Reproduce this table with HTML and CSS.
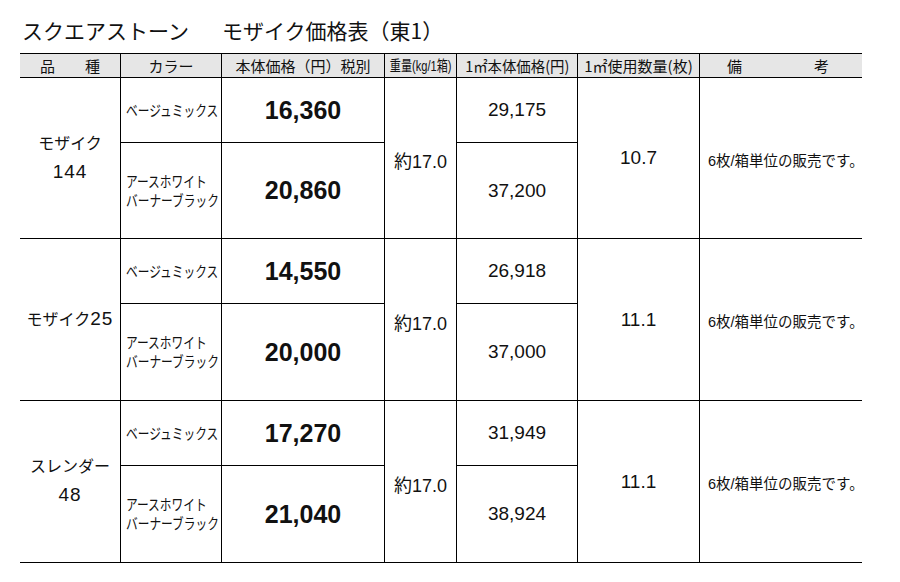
FILE: index.html
```html
<!DOCTYPE html>
<html lang="ja">
<head>
<meta charset="utf-8">
<title>スクエアストーン モザイク価格表</title>
<link rel="stylesheet" href="styles.css">
</head>
<body>
<h1 class="title">スクエアストーン<span class="gap">　</span>モザイク価格表（東1）</h1>
<div class="grid">
  <div class="h">品　　種</div>
  <div class="h">カラー</div>
  <div class="h">本体価格（円）税別</div>
  <div class="h"><span class="hcond">重量(kg/1箱)</span></div>
  <div class="h"><span class="hm2">1㎡本体価格(円)</span></div>
  <div class="h">1㎡使用数量(枚)</div>
  <div class="h hnote"><span>備</span><span>考</span></div>

  <div class="c prod span2"><div>モザイク<br><span class="num">144</span></div></div>
  <div class="c color"><span class="cond">ベージュミックス</span></div>
  <div class="c price">16,360</div>
  <div class="c weight span2">約17.0</div>
  <div class="c m2">29,175</div>
  <div class="c usage span2">10.7</div>
  <div class="c note span2">6枚/箱単位の販売です。</div>
  <div class="c color"><span class="cond">アースホワイト<br>バーナーブラック</span></div>
  <div class="c price">20,860</div>
  <div class="c m2">37,200</div>

  <div class="c prod span2"><div>モザイク<span class="num">25</span></div></div>
  <div class="c color"><span class="cond">ベージュミックス</span></div>
  <div class="c price">14,550</div>
  <div class="c weight span2">約17.0</div>
  <div class="c m2">26,918</div>
  <div class="c usage span2">11.1</div>
  <div class="c note span2">6枚/箱単位の販売です。</div>
  <div class="c color"><span class="cond">アースホワイト<br>バーナーブラック</span></div>
  <div class="c price">20,000</div>
  <div class="c m2">37,000</div>

  <div class="c prod span2"><div>スレンダー<br><span class="num">48</span></div></div>
  <div class="c color"><span class="cond">ベージュミックス</span></div>
  <div class="c price">17,270</div>
  <div class="c weight span2">約17.0</div>
  <div class="c m2">31,949</div>
  <div class="c usage span2">11.1</div>
  <div class="c note span2">6枚/箱単位の販売です。</div>
  <div class="c color"><span class="cond">アースホワイト<br>バーナーブラック</span></div>
  <div class="c price">21,040</div>
  <div class="c m2">38,924</div>
</div>
</body>
</html>
```
FILE: styles.css
```css
* { box-sizing: border-box; }
html, body { margin: 0; padding: 0; background: #fff; }
body {
  font-family: "Liberation Sans", "Noto Sans CJK JP", sans-serif;
  color: #111;
  width: 900px;
  height: 582px;
  overflow: hidden;
}
.title {
  margin: 0;
  padding: 16px 0 0 22px;
  height: 53px;
  font-family: "Noto Sans CJK JP", sans-serif;
  font-size: 21px;
  font-weight: 400;
  line-height: 28px;
  color: #111;
}
.title .gap { margin-right: 12px; }

.grid {
  margin-left: 20px;
  width: 842px;
  display: grid;
  grid-template-columns: 101px 101px 163px 72px 121px 122px 162px;
  grid-template-rows: 24px 65px 96px 65px 97px 65px 97px;
  border-top: 1px solid #000;
}
.grid > div {
  border-right: 1px solid #000;
  border-bottom: 1px solid #000;
  display: flex;
  align-items: center;
  justify-content: center;
}
.grid > div:nth-child(7) { border-right: none; }
.grid > .note { border-right: none; }

.h {
  background: #e6e6e6;
  font-size: 15px;
  white-space: nowrap;
  font-family: "Noto Sans CJK JP", sans-serif;
  line-height: 22px;
  overflow: hidden;
}
.hcond {
  display: inline-block;
  transform: scaleX(0.74);
  font-family: "Liberation Sans", "Noto Sans CJK JP", sans-serif;
}
.hm2 {
  display: inline-block;
  transform: scaleX(0.96);
}
.hnote {
  justify-content: space-between !important;
  padding: 0 33px 0 27px;
}
.span2 { grid-row: span 2; }

.prod {
  font-size: 16px;
  line-height: 28px;
  text-align: center;
  white-space: nowrap;
}
.prod .num { font-size: 19px; letter-spacing: 1px; }
.color {
  justify-content: flex-start !important;
  padding-left: 5px;
}
.cond {
  display: inline-block;
  white-space: nowrap;
  font-size: 15px;
  line-height: 19px;
  transform: scaleX(0.78);
  transform-origin: left center;
}
.price {
  font-size: 25px;
  font-weight: 700;
}
.weight { font-size: 18px; padding-top: 4px; }
.m2 { font-size: 19px; }
.usage { font-size: 19px; }
.note {
  justify-content: flex-start !important;
  padding-left: 8px;
  font-size: 14.5px;
  white-space: nowrap;
  padding-top: 2px;
}
```
